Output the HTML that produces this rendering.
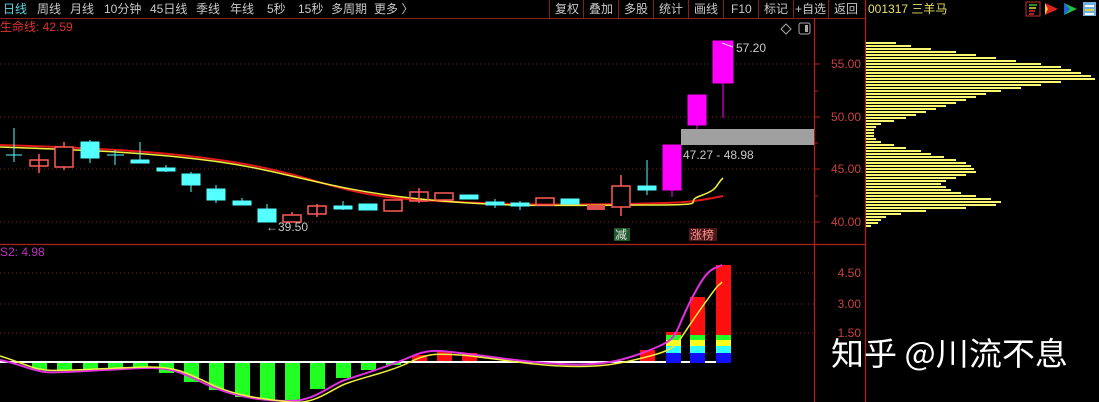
<!DOCTYPE html>
<html><head><meta charset="utf-8"><style>
html,body{margin:0;padding:0;background:#000;width:1099px;height:402px;overflow:hidden}
body{font-family:"Liberation Sans","Noto Sans CJK SC",sans-serif}
svg{position:absolute;left:0;top:0}
</style></head><body>
<svg width="1099" height="402" viewBox="0 0 1099 402" font-family="Liberation Sans, Noto Sans CJK SC, sans-serif">
<rect width="1099" height="402" fill="#000"/>
<!-- toolbar -->
<g font-size="12" fill="#c8c8c8">
<text x="3" y="13" fill="#5ad8e0">日线</text>
<text x="37" y="13">周线</text><text x="70" y="13">月线</text><text x="104" y="13">10分钟</text>
<text x="150" y="13">45日线</text><text x="196" y="13">季线</text><text x="230" y="13">年线</text>
<text x="267" y="13">5秒</text><text x="298" y="13">15秒</text><text x="331" y="13">多周期</text>
<text x="374" y="13">更多 〉</text>
<text x="555" y="13">复权</text><text x="589" y="13">叠加</text><text x="624" y="13">多股</text>
<text x="659" y="13">统计</text><text x="694" y="13">画线</text><text x="731" y="13">F10</text>
<text x="764" y="13">标记</text><text x="795" y="13">+自选</text><text x="834" y="13">返回</text>
<text x="868" y="13" fill="#e8e060">001317 三羊马</text>
</g>
<g stroke="#8a1c1c" stroke-width="1">
<line x1="549.5" y1="0" x2="549.5" y2="18"/><line x1="583.5" y1="0" x2="583.5" y2="18"/>
<line x1="618.5" y1="0" x2="618.5" y2="18"/><line x1="653.5" y1="0" x2="653.5" y2="18"/>
<line x1="688.5" y1="0" x2="688.5" y2="18"/><line x1="723.5" y1="0" x2="723.5" y2="18"/>
<line x1="758.5" y1="0" x2="758.5" y2="18"/><line x1="793.5" y1="0" x2="793.5" y2="18"/>
<line x1="828.5" y1="0" x2="828.5" y2="18"/>
<line x1="0" y1="18.5" x2="865" y2="18.5"/>
</g>
<g stroke="#b02020" stroke-width="1.3">
<line x1="814.5" y1="18" x2="814.5" y2="402"/><line x1="865.5" y1="0" x2="865.5" y2="402"/>
<line x1="0" y1="244.5" x2="865" y2="244.5"/>
</g>
<!-- header icons -->
<rect x="1026" y="2" width="14" height="14" fill="none" stroke="#c03030"/>
<g stroke-width="1.5"><line x1="1029" y1="5" x2="1037" y2="5" stroke="#30c030"/><line x1="1029" y1="8" x2="1036" y2="8" stroke="#e0e030"/><line x1="1029" y1="11" x2="1035" y2="11" stroke="#e03030"/><line x1="1029" y1="14" x2="1034" y2="14" stroke="#e03030"/></g>
<path d="M1045 3 L1058 9 L1045 15 L1048 9 Z" fill="#e02020"/><path d="M1045 3 L1048 9 L1045 15 Z" fill="#f0d020"/>
<path d="M1064 3 L1077 9 L1064 15 L1067 9 Z" fill="#20c040"/><path d="M1064 3 L1070 9 L1064 15 Z" fill="#2060e0"/>
<rect x="1083" y="2" width="13" height="14" fill="#70b0e0"/><rect x="1085" y="5" width="9" height="2" fill="#fff"/><rect x="1085" y="9" width="9" height="2" fill="#e0d040"/><rect x="1085" y="13" width="9" height="2" fill="#fff"/>
<text x="0" y="31" font-size="12" fill="#e03030">生命线: 42.59</text>
<path d="M786 24 L791 29 L786 34 L781 29 Z" fill="none" stroke="#aaa"/>
<rect x="799" y="23" width="11" height="11" rx="2" fill="none" stroke="#aaa"/><rect x="805" y="25" width="3" height="7" fill="#aaa"/>
<!-- grid -->
<g stroke="#7a2020" stroke-dasharray="1 3">
<line x1="0" y1="64" x2="814" y2="64"/><line x1="0" y1="117" x2="814" y2="117"/>
<line x1="0" y1="169" x2="814" y2="169"/><line x1="0" y1="222" x2="814" y2="222"/>
<line x1="0" y1="273" x2="814" y2="273"/><line x1="0" y1="304" x2="814" y2="304"/><line x1="0" y1="333" x2="814" y2="333"/>
</g>
<g font-size="12" fill="#c84040" text-anchor="end">
<text x="861" y="68">55.00</text><text x="861" y="121">50.00</text><text x="861" y="173">45.00</text><text x="861" y="226">40.00</text>
<text x="861" y="277">4.50</text><text x="861" y="308">3.00</text><text x="861" y="337">1.50</text>
</g>
<g stroke="#b02020"><line x1="815" y1="64" x2="820" y2="64"/><line x1="815" y1="117" x2="820" y2="117"/><line x1="815" y1="169" x2="820" y2="169"/><line x1="815" y1="222" x2="820" y2="222"/><line x1="815" y1="91" x2="818" y2="91"/><line x1="815" y1="143" x2="818" y2="143"/><line x1="815" y1="196" x2="818" y2="196"/></g>
<!-- volume profile -->
<g fill="#f8f870">
<rect x="866" y="42" width="30" height="2"/><rect x="866" y="45" width="45" height="2"/><rect x="866" y="48" width="65" height="2"/><rect x="866" y="51" width="90" height="2"/><rect x="866" y="54" width="110" height="2"/><rect x="866" y="57" width="130" height="2"/><rect x="866" y="60" width="150" height="2"/><rect x="866" y="63" width="175" height="2"/><rect x="866" y="66" width="195" height="2"/><rect x="866" y="69" width="205" height="2"/><rect x="866" y="72" width="215" height="2"/><rect x="866" y="75" width="225" height="2"/><rect x="866" y="78" width="229" height="2"/><rect x="866" y="81" width="195" height="2"/><rect x="866" y="84" width="175" height="2"/><rect x="866" y="87" width="155" height="2"/><rect x="866" y="90" width="135" height="2"/><rect x="866" y="93" width="120" height="2"/><rect x="866" y="96" width="110" height="2"/><rect x="866" y="99" width="100" height="2"/><rect x="866" y="102" width="90" height="2"/><rect x="866" y="105" width="80" height="2"/><rect x="866" y="108" width="70" height="2"/><rect x="866" y="111" width="60" height="2"/><rect x="866" y="114" width="50" height="2"/><rect x="866" y="117" width="40" height="2"/><rect x="866" y="120" width="28" height="2"/><rect x="866" y="123" width="15" height="2"/><rect x="866" y="126" width="10" height="2"/><rect x="866" y="129" width="8" height="2"/><rect x="866" y="132" width="8" height="2"/><rect x="866" y="135" width="8" height="2"/><rect x="866" y="138" width="10" height="2"/><rect x="866" y="141" width="15" height="2"/><rect x="866" y="144" width="28" height="2"/><rect x="866" y="147" width="40" height="2"/><rect x="866" y="150" width="55" height="2"/><rect x="866" y="153" width="65" height="2"/><rect x="866" y="156" width="78" height="2"/><rect x="866" y="159" width="90" height="2"/><rect x="866" y="162" width="100" height="2"/><rect x="866" y="165" width="105" height="2"/><rect x="866" y="168" width="108" height="2"/><rect x="866" y="171" width="110" height="2"/><rect x="866" y="174" width="100" height="2"/><rect x="866" y="177" width="90" height="2"/><rect x="866" y="180" width="80" height="2"/><rect x="866" y="183" width="75" height="2"/><rect x="866" y="186" width="80" height="2"/><rect x="866" y="189" width="85" height="2"/><rect x="866" y="192" width="95" height="2"/><rect x="866" y="195" width="110" height="2"/><rect x="866" y="198" width="125" height="2"/><rect x="866" y="201" width="135" height="2"/><rect x="866" y="204" width="130" height="2"/><rect x="866" y="207" width="100" height="2"/><rect x="866" y="210" width="60" height="2"/><rect x="866" y="213" width="35" height="2"/><rect x="866" y="216" width="20" height="2"/><rect x="866" y="219" width="15" height="2"/><rect x="866" y="222" width="12" height="2"/><rect x="866" y="225" width="5" height="2"/>
</g>
<!-- MAs -->
<path d="M0 145 C100 148 180 152 250 165 S340 195 420 200 S560 205 620 204 S690 203 723 196" fill="none" stroke="#e01818" stroke-width="2"/>
<path d="M0 147 C80 150 150 152 220 162 S330 190 420 199 S560 205 640 205 S680 203 700 196 S715 185 723 178" fill="none" stroke="#f0f040" stroke-width="1.5"/>
<!-- candles -->
<g stroke="#54ffff" fill="#54ffff" stroke-width="1">
<line x1="14" y1="128" x2="14" y2="162"/><line x1="6" y1="155" x2="22" y2="155"/>
<line x1="90" y1="140" x2="90" y2="163"/><rect x="81" y="142" width="18" height="16"/>
<line x1="115" y1="150" x2="115" y2="165"/><line x1="107" y1="155" x2="124" y2="155"/>
<line x1="140" y1="142" x2="140" y2="163"/><rect x="131" y="160" width="18" height="3"/>
<line x1="166" y1="165" x2="166" y2="172"/><rect x="157" y="168" width="18" height="3"/>
<line x1="191" y1="172" x2="191" y2="192"/><rect x="182" y="174" width="18" height="11"/>
<line x1="216" y1="185" x2="216" y2="203"/><rect x="207" y="189" width="18" height="11"/>
<line x1="242" y1="198" x2="242" y2="205"/><rect x="233" y="201" width="18" height="4"/>
<line x1="267" y1="204" x2="267" y2="222"/><rect x="258" y="209" width="18" height="13"/>
<line x1="343" y1="201" x2="343" y2="210"/><rect x="334" y="206" width="18" height="3"/>
<rect x="359" y="204" width="18" height="6"/>
<rect x="460" y="195" width="18" height="4"/>
<line x1="495" y1="199" x2="495" y2="208"/><rect x="486" y="202" width="18" height="3"/>
<line x1="520" y1="201" x2="520" y2="210"/><rect x="511" y="203" width="18" height="3"/>
<rect x="561" y="199" width="18" height="5"/>
<line x1="647" y1="160" x2="647" y2="195"/><rect x="638" y="186" width="18" height="4"/>
</g>
<g stroke="#ff5a5a" fill="none" stroke-width="1.5">
<line x1="39" y1="154" x2="39" y2="173"/><rect x="30" y="160" width="18" height="6"/>
<line x1="64" y1="142" x2="64" y2="170"/><rect x="55" y="147" width="18" height="20" fill="#000"/>
<line x1="292" y1="212" x2="292" y2="215"/><rect x="283" y="215" width="18" height="7"/>
<line x1="317" y1="204" x2="317" y2="217"/><rect x="308" y="206" width="18" height="8"/>
<rect x="384" y="200" width="18" height="11"/>
<line x1="419" y1="188" x2="419" y2="203"/><rect x="410" y="192" width="18" height="9"/>
<rect x="435" y="193" width="18" height="7"/>
<rect x="536" y="198" width="18" height="7"/>
<line x1="621" y1="175" x2="621" y2="216"/><rect x="612" y="186" width="18" height="21" fill="#000"/>
</g>
<rect x="587" y="205" width="18" height="5" fill="#e05050"/>
<g fill="#ff00ff" stroke="#ff00ff">
<line x1="672" y1="180" x2="672" y2="197"/><rect x="663" y="145" width="18" height="45"/>
<line x1="697" y1="120" x2="697" y2="129"/><rect x="688" y="95" width="18" height="30"/>
<line x1="723" y1="75" x2="723" y2="118"/><rect x="713" y="41" width="20" height="42"/>
</g>
<rect x="681" y="129" width="133" height="16" fill="#a0a0a0"/>
<g font-size="12" fill="#c8c8c8">
<text x="683" y="159">47.27 - 48.98</text>
<text x="736" y="52">57.20</text>
<text x="266" y="231">←39.50</text>
</g>
<path d="M722 43 L733 47" stroke="#ddd" stroke-width="1"/>
<rect x="614" y="228" width="16" height="13" fill="#1f5a2a"/><text x="615" y="239" font-size="12" fill="#e0e0e0">减</text>
<rect x="689" y="228" width="28" height="13" fill="#4a1818"/><text x="690" y="239" font-size="12" fill="#ff9090">涨榜</text>
<!-- lower panel -->
<text x="0" y="256" font-size="12" fill="#c030c0">S2: 4.98</text>
<line x1="0" y1="362" x2="730" y2="362" stroke="#fff" stroke-width="2"/>
<g fill="#22ff22">
<rect x="32" y="363" width="15" height="7"/><rect x="57" y="363" width="15" height="7"/><rect x="83" y="363" width="15" height="6"/><rect x="108" y="363" width="15" height="5"/><rect x="133" y="363" width="15" height="5"/><rect x="159" y="363" width="15" height="10"/><rect x="184" y="363" width="15" height="19"/><rect x="209" y="363" width="15" height="27"/><rect x="235" y="363" width="15" height="34"/><rect x="260" y="363" width="15" height="37"/><rect x="285" y="363" width="15" height="39"/><rect x="310" y="363" width="15" height="26"/><rect x="336" y="363" width="15" height="15"/><rect x="361" y="363" width="15" height="7"/><rect x="386" y="363" width="15" height="2"/>
</g>
<g fill="#ff1010">
<rect x="412" y="355" width="15" height="6"/><rect x="437" y="351" width="15" height="10"/><rect x="462" y="353" width="15" height="8"/>
<rect x="640" y="350" width="15" height="11"/>
<rect x="666" y="332" width="15" height="3"/><rect x="690" y="297" width="15" height="38"/><rect x="716" y="265" width="15" height="70"/>
</g>
<g>
<rect x="666" y="335" width="15" height="5" fill="#22ff22"/><rect x="666" y="340" width="15" height="6" fill="#ffff20"/><rect x="666" y="346" width="15" height="7" fill="#30ffff"/><rect x="666" y="353" width="15" height="10" fill="#1010ff"/>
<rect x="690" y="335" width="15" height="5" fill="#22ff22"/><rect x="690" y="340" width="15" height="6" fill="#ffff20"/><rect x="690" y="346" width="15" height="7" fill="#30ffff"/><rect x="690" y="353" width="15" height="10" fill="#1010ff"/>
<rect x="716" y="335" width="15" height="5" fill="#22ff22"/><rect x="716" y="340" width="15" height="6" fill="#ffff20"/><rect x="716" y="346" width="15" height="7" fill="#30ffff"/><rect x="716" y="353" width="15" height="10" fill="#1010ff"/>
</g>
<path d="M0 360 C20 364 30 370 45 372 S120 368 150 368 S190 378 215 388 S265 401 290 401 S330 385 345 380 S390 366 410 357 S440 351 460 353 S520 362 560 364 S620 362 650 350 S672 338 690 302 S712 270 722 265" fill="none" stroke="#e030e0" stroke-width="2"/>
<path d="M0 356 C20 362 30 368 45 370 S120 367 150 367 S190 375 215 386 S265 399 290 402 S330 390 345 384 S390 372 410 362 S440 354 460 355 S520 364 560 366 S620 364 650 356 S675 345 700 310 S715 290 722 282" fill="none" stroke="#f0f040" stroke-width="1.5"/>
<!-- watermark -->
<text x="831" y="365" font-size="32" fill="#ffffff" font-family="Noto Sans CJK SC, sans-serif" textLength="237" lengthAdjust="spacingAndGlyphs">知乎 @川流不息</text>
</svg>
</body></html>
